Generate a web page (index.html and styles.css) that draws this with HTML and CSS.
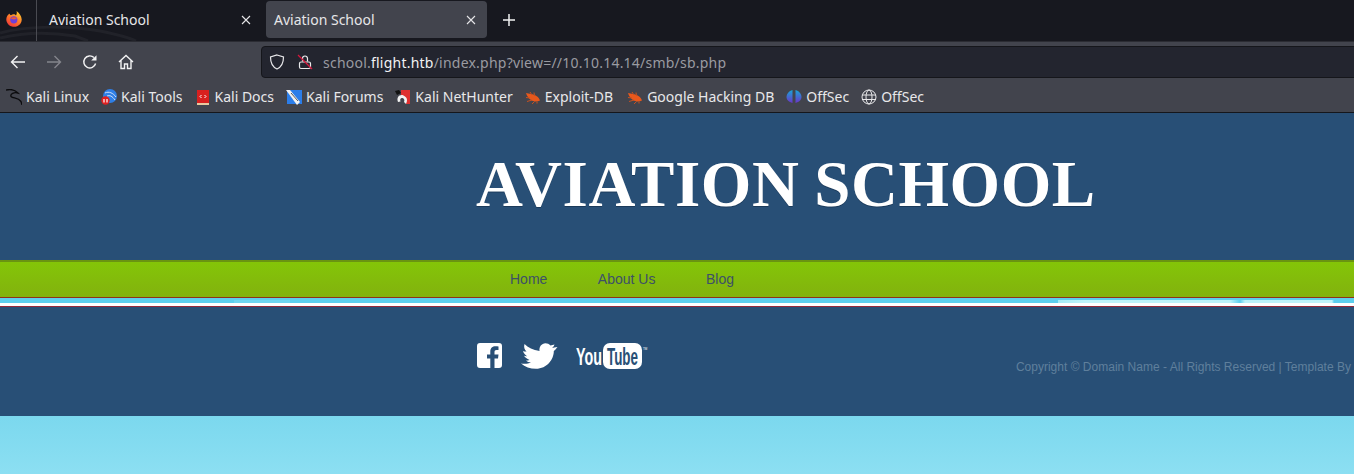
FILE: index.html
```html
<!DOCTYPE html>
<html lang="en">
<head>
<meta charset="utf-8">
<title>Aviation School</title>
<link rel="stylesheet" href="styles.css">
</head>
<body>
<svg class="defs" width="0" height="0" aria-hidden="true">
  <defs>
    <symbol id="bug" viewBox="0 0 16 16">
      <path d="M1 4 L6 5 C10 5.500 13.500 7.500 15 11.500 C12 13 8.500 12.800 6 11 C3.500 9.500 2 7 1 4Z" fill="#e8581c"/>
      <path d="M5 3 L7 6 M9 3.500 L9.500 7 M1 8.500 L5 9 M2 12.500 L7 11 M7 15 L9.500 12.500 M12 14.500 L12 12.500" stroke="#c9501f" stroke-width="1" fill="none"/>
    </symbol>
    <linearGradient id="fxg" x1="0.8" y1="0" x2="0.2" y2="1"><stop offset="0" stop-color="#ffd02e"/><stop offset=".5" stop-color="#ff7a2a"/><stop offset="1" stop-color="#f0323c"/></linearGradient>
    <linearGradient id="osg" x1="0" y1="0" x2="0" y2="1"><stop offset="0" stop-color="#18a5d8"/><stop offset="1" stop-color="#6a35c8"/></linearGradient>
  </defs>
</svg>

<header class="browser">
  <div class="tabbar">
    <svg class="wallpaper" width="240" height="41" viewBox="0 0 240 41" aria-hidden="true">
      <path d="M0 33 C30 25 70 26 100 31 C115 34 128 37 136 41 M0 38 C25 32 50 32 75 36 L88 41" fill="none" stroke="#212229" stroke-width="3"/>
    </svg>
    <div class="fxslot">
      <svg width="16" height="16" viewBox="0 0 16 16" aria-hidden="true">
        <path d="M10.500 0 C13 2 15.500 4.500 15.700 8.300 A7.700 7.400 0 1 1 1.500 4.500 C2.500 3.500 3 3 3.500 2.500 C3.800 3.500 4.300 4 5 4.300 C6.500 3 9 3 10 4.500 C11 3 11 1.500 10.500 0Z" fill="url(#fxg)"/>
        <circle cx="7.800" cy="8.800" r="3.600" fill="#6f3fd8"/>
        <path d="M4.600 7.500 C6 6 9.500 5.800 11 7.500 L8 8.500Z" fill="#ef5a32"/>
      </svg>
    </div>
    <div class="tab">
      <span class="tabtitle">Aviation School</span>
      <svg class="tabclose" width="10" height="10" viewBox="0 0 10 10" aria-hidden="true"><path d="M1 1 L9 9 M9 1 L1 9"/></svg>
    </div>
    <div class="tab tab-active">
      <span class="tabtitle">Aviation School</span>
      <svg class="tabclose" width="10" height="10" viewBox="0 0 10 10" aria-hidden="true"><path d="M1 1 L9 9 M9 1 L1 9"/></svg>
    </div>
    <svg class="newtab" width="12" height="12" viewBox="0 0 12 12" aria-hidden="true"><path d="M6 0 V12 M0 6 H12"/></svg>
  </div>

  <div class="navbar">
    <svg class="navicon" width="16" height="16" viewBox="0 0 16 16" aria-hidden="true"><path d="M15 8 H1.500 M7.500 2 L1.500 8 L7.500 14"/></svg>
    <svg class="navicon navicon-off" width="16" height="16" viewBox="0 0 16 16" aria-hidden="true"><path d="M1 8 H14.500 M8.500 2 L14.500 8 L8.500 14"/></svg>
    <svg class="navicon" width="16" height="16" viewBox="0 0 16 16" aria-hidden="true"><path d="M13.600 9.500 A6 6 0 1 1 12 3.600"/><path class="solid" d="M14.500 1.200 V6.500 H9.200Z"/></svg>
    <svg class="navicon" width="16" height="16" viewBox="0 0 16 16" aria-hidden="true"><path d="M1 8 L8 1.500 L15 8 M3 6.500 V14.500 H6.500 V10 H9.500 V14.500 H13 V6.500"/></svg>
    <div class="urlbar">
      <svg class="urlicon" width="16" height="16" viewBox="0 0 16 16" aria-hidden="true"><path d="M8 1 L14.500 3 C14.500 9 12.500 13 8 15 C3.500 13 1.500 9 1.500 3Z"/></svg>
      <svg class="urlicon" width="16" height="16" viewBox="0 0 16 16" aria-hidden="true"><path d="M5.500 7.500 V4.500 A2.500 2.500 0 0 1 10.500 4.500 V7.500"/><rect x="2.500" y="8" width="11" height="6.500" rx="1.500"/><path class="strike" d="M1 1 L15 15"/></svg>
      <span class="url"><span class="urldim">school.</span>flight.htb<span class="urldim">/index.php?view=//10.10.14.14/smb/sb.php</span></span>
    </div>
  </div>

  <nav class="bookmarks">
    <a class="bm">
      <svg class="bmicon" width="16" height="16" viewBox="0 0 16 16" aria-hidden="true"><path d="M0 1 C4 0 9 1 12 4 C8 3 4 5 5 7.500 C7 9.500 12 8.500 15 12.500 L16 16" fill="none" stroke="#0b0b0d" stroke-width="1.300"/></svg>
      <span>Kali Linux</span>
    </a>
    <a class="bm">
      <svg class="bmicon" width="16" height="16" viewBox="0 0 16 16" aria-hidden="true"><circle cx="9" cy="7" r="7" fill="#2f7fe6"/><path d="M4 4 C8 2 12 4 15 8 M6 7 C9 6 11 7 14 11" stroke="#cfe2fb" fill="none"/><circle cx="4.500" cy="11.500" r="4.200" fill="#e02020"/><path d="M3 10 V13.500 M6 10 V13.500" stroke="#fff" stroke-width="1.200"/></svg>
      <span>Kali Tools</span>
    </a>
    <a class="bm">
      <svg class="bmicon" width="16" height="16" viewBox="0 0 16 16" aria-hidden="true"><rect x="2" y="1" width="12" height="13" fill="#d8201f"/><rect x="2" y="14" width="12" height="2" fill="#e8c9a0"/><path d="M6.500 6 L5 7.500 L6.500 9 M9.500 6 L11 7.500 L9.500 9" stroke="#fff" fill="none"/></svg>
      <span>Kali Docs</span>
    </a>
    <a class="bm">
      <svg class="bmicon" width="16" height="16" viewBox="0 0 16 16" aria-hidden="true"><rect x="1" y="1" width="15" height="14" fill="#2b7de9"/><path d="M0 1 L4 1 L14 13 L11 16 Z" fill="#f2f2f2"/><path d="M5 4 L12 12" stroke="#555"/></svg>
      <span>Kali Forums</span>
    </a>
    <a class="bm">
      <svg class="bmicon" width="16" height="16" viewBox="0 0 16 16" aria-hidden="true"><path d="M6 1 H15 V15 H11 C12 10 10 7 6 6Z" fill="#df3030"/><path d="M3 13 C1 8 5 5 8.500 6.500 C12 8 13 11 11 15 L9 13 C10 11 9 9.500 7.500 9 C6 8.500 4.500 10 5.500 12.500Z" fill="#f2f2f2"/><path d="M0 2 L4 1 L6 4 L2 6Z" fill="#111"/></svg>
      <span>Kali NetHunter</span>
    </a>
    <a class="bm"><svg class="bmicon" width="16" height="16" aria-hidden="true"><use href="#bug"/></svg><span>Exploit-DB</span></a>
    <a class="bm bm-ghdb"><svg class="bmicon" width="16" height="16" aria-hidden="true"><use href="#bug"/></svg><span>Google Hacking DB</span></a>
    <a class="bm">
      <svg class="bmicon" width="16" height="16" viewBox="0 0 16 16" aria-hidden="true"><path d="M6.500 1 C3 2 .5 5 .5 8 C.5 11 3 13 6.500 14Z" fill="url(#osg)"/><path d="M9.500 1 C13 2 15.500 5 15.500 8 C15.500 11 13 13 9.500 14Z" fill="url(#osg)"/><path d="M8 1 V16" stroke="url(#osg)" stroke-width="1.500"/></svg>
      <span>OffSec</span>
    </a>
    <a class="bm">
      <svg class="bmicon bmglobe" width="16" height="16" viewBox="0 0 16 16" aria-hidden="true"><circle cx="8" cy="8" r="7"/><ellipse cx="8" cy="8" rx="3" ry="7"/><path d="M1 6 H15 M1 10.500 H15"/></svg>
      <span>OffSec</span>
    </a>
  </nav>
</header>

<main class="site">
  <section class="masthead"><h1 class="sitetitle">AVIATION SCHOOL</h1></section>
  <nav class="mainmenu">
    <a class="menulink">Home</a>
    <a class="menulink">About Us</a>
    <a class="menulink">Blog</a>
  </nav>
  <div class="skystrip"></div>
  <footer class="sitefooter">
    <div class="social">
      <svg class="fb" width="25" height="25" viewBox="0 0 25 25" role="img" aria-label="Facebook"><path fill-rule="evenodd" d="M3 0 H22 A3 3 0 0 1 25 3 V22 A3 3 0 0 1 22 25 H17.500 V15.500 H21 L21.500 11.500 H17.500 V9 C17.500 7.800 18 7 19.500 7 H21.500 V3.500 C20.500 3.400 19.500 3.300 18.500 3.300 C15.500 3.300 13.300 5.200 13.300 8.500 V11.500 H10 V15.500 H13.300 V25 H3 A3 3 0 0 1 0 22 V3 A3 3 0 0 1 3 0Z" fill="#fff"/></svg>
      <svg class="tw" width="37" height="26" viewBox="0 0 37 26" role="img" aria-label="Twitter"><path d="M0 20.500 C3 21 7 21 10 19.500 C8 19.500 6 18.800 5 17.500 C6 17.500 7.500 17.500 8.500 17 C6 16 4 14.500 3 12.800 C4 13.200 5 13.300 6 13.200 C4 11.500 2.500 10 2 8 C3 8.500 4.500 8.700 5.500 8.500 C3.500 6.500 2.500 4 3.500 1 C7 4.500 12 7 18.500 8 C18 4 20.500 .3 24.500 .3 C26.500 .3 28 1 29.500 2.500 C31 2.300 32 2 33.500 1.500 C33 3 32.300 4 31 4.800 C32.500 4.700 34 4.400 36.500 4 C35.500 5.500 34 7 32.800 8 C33 16 26 25.800 15 25.800 C9 25.800 4 24 0 20.500Z" fill="#fff"/></svg>
      <svg class="yt" width="72" height="26" viewBox="0 0 72 26" role="img" aria-label="YouTube">
        <rect x="27" y="0" width="39" height="26" rx="7" fill="#fff"/>
        <text class="ytyou" transform="scale(1 1.85)" x="0" y="11.900" textLength="26" lengthAdjust="spacingAndGlyphs">You</text>
        <text class="yttube" transform="scale(1 1.85)" x="31" y="11.900" textLength="31" lengthAdjust="spacingAndGlyphs">Tube</text>
        <text class="yttm" x="67" y="7">TM</text>
      </svg>
    </div>
    <p class="copyright">Copyright © Domain Name - All Rights Reserved | Template By</p>
  </footer>
  <div class="skyfill"></div>
</main>
</body>
</html>
```
FILE: styles.css
```css
* { box-sizing: border-box; }
html, body { margin: 0; padding: 0; height: 100%; }
body {
  width: 1354px;
  height: 474px;
  overflow: hidden;
  display: flex;
  flex-direction: column;
  background: #7bd8ee;
  font-family: "Liberation Sans", Arial, sans-serif;
}
.defs { position: absolute; }

/* browser chrome */
.browser { font-family: "Noto Sans", "Open Sans", sans-serif; flex: none; }
.tabbar {
  position: relative;
  height: 41px;
  background: #17181f;
  display: flex;
  align-items: flex-start;
  color: #e6e6e8;
  overflow: hidden;
}
.wallpaper { position: absolute; left: 0; top: 0; }
.fxslot {
  position: relative;
  width: 37px;
  height: 41px;
  border-right: 1px solid #4a4b52;
  padding: 11px 0 0 6px;
  flex: none;
}
.fxslot svg { display: block; }
.tab {
  position: relative;
  width: 224px;
  height: 37px;
  margin: 1px 0 0 0;
  border-radius: 4px;
  display: flex;
  align-items: center;
  justify-content: space-between;
  padding: 0 10px 0 12px;
  font-size: 14px;
  flex: none;
}
.tab + .tab-active { margin-left: 5px; width: 221px; padding: 0 11px 0 8px; }
.tab-active { background: #42444d; }
.tabtitle { display: block; }
.tabclose { stroke: #e6e6e8; stroke-width: 1.100; fill: none; }
.newtab { position: relative; margin: 14px 0 0 16px; stroke: #f2f2f3; stroke-width: 1.500; fill: none; }

.navbar {
  height: 36px;
  background: #42444d;
  display: flex;
  align-items: flex-start;
  padding: 4px 0 0 10px;
  border-top: 1px solid #2b2c33;
}
.navicon {
  flex: none;
  margin: 8px 20px 0 0;
  stroke: #f2f2f3;
  stroke-width: 1.400;
  fill: none;
}
.navicon .solid { fill: #f2f2f3; stroke: none; }
.navicon-off { stroke: #84858c; }
.urlbar {
  flex: 1;
  margin-left: 107px;
  height: 32px;
  margin-right: -8px;
  background: #23252f;
  border: 1px solid #15161b;
  border-radius: 4px;
  display: flex;
  align-items: center;
  padding-left: 7px;
  color: #f2f2f3;
  font-size: 14px;
}
.urlicon { flex: none; margin-right: 12px; stroke: #e8e8ea; stroke-width: 1.200; fill: none; }
.urlicon .strike { stroke: #d8163c; stroke-width: 1.300; }
.url { margin-left: -2px; letter-spacing: .225px; }
.urldim { color: #9a9ba1; }

.bookmarks {
  height: 36px;
  background: #42444d;
  border-bottom: 1px solid #15161b;
  display: flex;
  align-items: center;
  gap: 12px;
  padding: 4px 0 0 6px;
  color: #e8e8ea;
  font-size: 14px;
}
.bm { display: flex; align-items: center; gap: 4px; }
.bm-ghdb { margin-left: 2px; }
.bmicon { flex: none; display: block; }
.bmglobe { stroke: #e8e8ea; stroke-width: 1; fill: none; }

/* site */
.site { flex: 1; display: flex; flex-direction: column; }
.masthead {
  flex: none;
  height: 147px;
  background: #284f76;
  padding: 34px 0 0 476px;
}
.sitetitle {
  margin: 0;
  font-family: "Liberation Serif", "Times New Roman", serif;
  font-weight: 700;
  font-size: 65px;
  line-height: 75px;
  letter-spacing: .55px;
  word-spacing: -2px;
  color: #fff;
  white-space: nowrap;
  text-shadow: 0 1px 0 #1b3a5a;
}
.mainmenu {
  flex: none;
  height: 38px;
  background: linear-gradient(#84c508, #82b20e);
  border-top: 2px solid #6a9411;
  border-bottom: 1px solid #93301a;
  display: flex;
  padding: 8px 0 0 510px;
  gap: 50.500px;
  font-size: 14px;
  line-height: 18px;
  color: #3d5068;
}
.menulink { display: block; }
.skystrip {
  flex: none;
  height: 9px;
  border-bottom: 1px solid #96283a;
  background-color: #fff;
  background-image:
    linear-gradient(to right, transparent 234px, #70d6f0 234px, #70d6f0 290px, transparent 290px, transparent 1058px, #a6ecf6 1058px, #c0f4fa 1085px, #bcf3fa 1230px, #5dcfee 1240px, #bcf3fa 1245px, #c0f4fa 1332px, transparent 1334px),
    linear-gradient(#5dcfee, #5dcfee);
  background-repeat: no-repeat;
  background-size: 100% 3px, 100% 5px;
  background-position: 0 2px, 0 0;
}
.sitefooter {
  flex: none;
  height: 109px;
  background: #284f76;
  display: flex;
  align-items: flex-start;
  padding: 36px 3px 0 477px;
}
.social { display: flex; align-items: flex-start; gap: 19px; flex: none; }
.social svg { display: block; flex: none; }
.social .yt { margin-left: -1px; }
.ytyou, .yttube { font-family: "Liberation Sans", sans-serif; font-weight: 700; font-size: 13px; }
.ytyou { fill: #fff; }
.yttube { fill: #284f76; }
.yttm { font-family: "Liberation Sans", sans-serif; font-size: 3px; fill: #fff; }
.copyright {
  margin: 16px 0 0 auto;
  font-size: 12px;
  line-height: 16px;
  letter-spacing: .01px;
  color: #5f7f9c;
  white-space: nowrap;
}
.skyfill {
  flex: 1;
  background: linear-gradient(#7bd8ee, #8cdff2);
}
```
